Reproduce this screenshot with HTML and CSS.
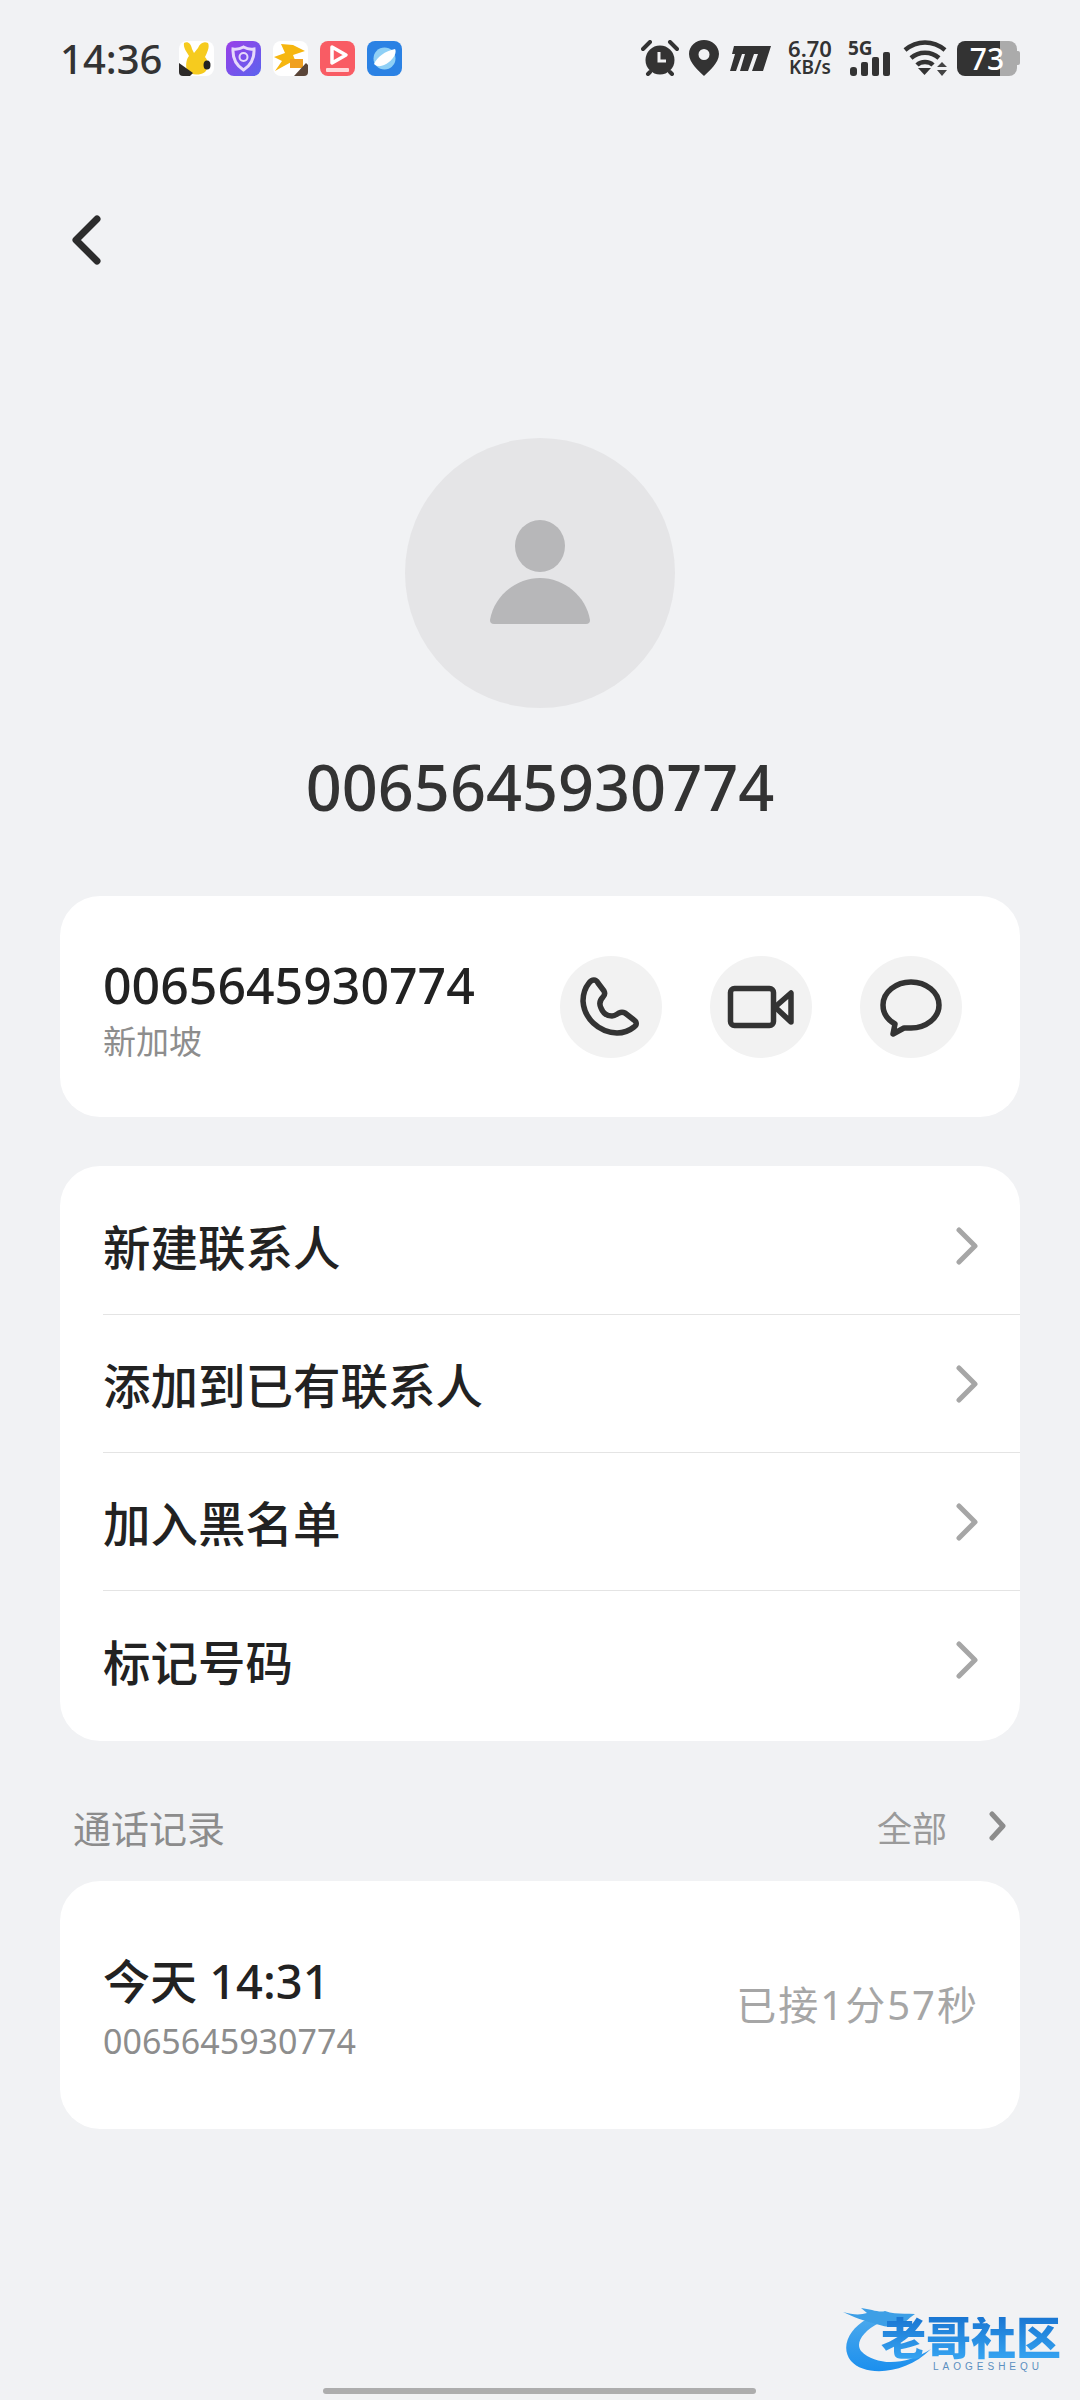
FILE: index.html
```html
<!DOCTYPE html>
<html lang="zh-CN">
<head>
    <meta charset="UTF-8">
    <meta name="viewport" content="width=device-width, initial-scale=1.0">
    <title>0065645930774</title>
    <link rel="stylesheet" href="styles.css">
</head>
<body>
    <div class="page">
        <div class="status-bar">
            <div class="status-left">
                <span class="clock">14:36</span>
                <svg class="app-icon" viewBox="0 0 35 35">
                    <rect width="35" height="35" rx="8" fill="#fff"/>
                    <path d="M5 2 C9 0 12 3 13 8 L15 12 L19 7 C21 2 25 0 29 2 C31 6 28 12 26 16 C30 20 30 27 26 31 C20 35 12 34 8 30 C6 23 8 17 10 15 C8 11 4 7 5 2Z" fill="#f6cb1e"/>
                    <ellipse cx="28" cy="24" rx="3.500" ry="4.500" fill="#222"/>
                    <path d="M0 22 L14 32 L11 35 L4 35 Q0 35 0 31Z" fill="#2c2a28"/>
                </svg>
                <svg class="app-icon" viewBox="0 0 35 35">
                    <defs>
                        <linearGradient id="shieldBg" x1="0" y1="0" x2="1" y2="1">
                            <stop offset="0" stop-color="#9a3fe8"/>
                            <stop offset="1" stop-color="#5a63ee"/>
                        </linearGradient>
                    </defs>
                    <rect width="35" height="35" rx="8" fill="url(#shieldBg)"/>
                    <path d="M17.500 6 C21 8 25 8.500 28 8 C28.500 17 24.500 24.500 17.500 29 C10.500 24.500 6.500 17 7 8 C10 8.500 14 8 17.500 6Z" fill="none" stroke="#e6d9fb" stroke-width="3"/>
                    <circle cx="17.500" cy="16" r="4" fill="none" stroke="#e6d9fb" stroke-width="2"/>
                </svg>
                <svg class="app-icon" viewBox="0 0 35 35">
                    <rect width="35" height="35" rx="8" fill="#fff"/>
                    <path d="M1 16 L12 12 L8 3 L20 4 L32 10 L20 14 L22 19 L11 25 L2 30 L9 20Z" fill="#f6b60f"/>
                    <rect x="17" y="18" width="13" height="9" fill="#f0a020"/>
                    <path d="M21 35 L33 22 L35 24 L35 31 Q35 35 31 35Z" fill="#5a4538"/>
                </svg>
                <svg class="app-icon" viewBox="0 0 35 35">
                    <rect width="35" height="35" rx="8" fill="#f95c64"/>
                    <path d="M12 6 L26 14 L12 22Z" fill="none" stroke="#fff" stroke-width="3.500" stroke-linejoin="round"/>
                    <rect x="6" y="27" width="23" height="4" rx="1" fill="#ffd9db"/>
                </svg>
                <svg class="app-icon" viewBox="0 0 35 35">
                    <rect width="35" height="35" rx="8" fill="#2b82e4"/>
                    <circle cx="17.500" cy="17.500" r="11" fill="#8fd0f6"/>
                    <path d="M7 23 C10 16 18 10 28 8 C30 11 27 17 22 21 C17 25 11 27 7 23Z" fill="#fff"/>
                </svg>
            </div>
            <div class="status-right">
                <svg class="st-alarm" viewBox="0 0 38 36">
                    <circle cx="19" cy="20" r="14.500" fill="#333"/>
                    <path d="M2 9 L9 2 M36 9 L29 2 M7 34 L9 32 M31 34 L29 32" stroke="#333" stroke-width="4" stroke-linecap="round"/>
                    <path d="M18 12 V21 H25" fill="none" stroke="#f1f2f4" stroke-width="3"/>
                </svg>
                <svg class="st-pin" viewBox="0 0 30 36">
                    <path fill-rule="evenodd" d="M15 0 C23 0 30 6 30 14 C30 23 20 31 15 36 C10 31 0 23 0 14 C0 6 7 0 15 0Z M15 9 A5.500 5.500 0 1 0 15 20 A5.500 5.500 0 1 0 15 9Z" fill="#333"/>
                </svg>
                <svg class="st-brand" viewBox="0 0 41 25">
                    <path d="M4 0 H41 L33 25 H22 L28 8 H24 L18 25 H10 L15 8 H12 L6 25 H0 L5 8 H2Z" fill="#333"/>
                </svg>
                <div class="st-speed">
                    <span>6.70</span>
                    <span class="st-speed-unit">KB/s</span>
                </div>
                <div class="st-signal">
                    <span class="st-5g">5G</span>
                    <svg class="st-bars" viewBox="0 0 41 36">
                        <rect x="0" y="27" width="7" height="9" rx="3" fill="#333"/>
                        <rect x="11" y="22" width="7" height="14" rx="2" fill="#333"/>
                        <rect x="22" y="17" width="7" height="19" rx="2" fill="#333"/>
                        <rect x="33" y="12" width="7" height="24" rx="2" fill="#333"/>
                    </svg>
                </div>
                <svg class="st-wifi" viewBox="0 0 46 36">
                    <path d="M2 10 C14 0 30 0 42 10 M8 18 C16 11 28 11 36 18 M14 25 C18 21 26 21 30 25" fill="none" stroke="#333" stroke-width="4.500"/>
                    <path d="M15 28 H28 L21.500 35Z" fill="#333"/>
                    <path d="M39 22 L44 27 H34Z M39 36 L44 30 H34Z" fill="#444"/>
                </svg>
                <div class="battery">
                    <div class="battery-body">73</div>
                    <div class="battery-tip"></div>
                </div>
            </div>
        </div>

        <div class="header">
            <svg class="back" viewBox="0 0 34 50">
                <path d="M27 4 L6 25 L27 46" fill="none" stroke="#2c2c2c" stroke-width="7" stroke-linecap="round" stroke-linejoin="round"/>
            </svg>
        </div>

        <div class="profile">
            <div class="avatar">
                <svg class="avatar-person" viewBox="0 0 100 104">
                    <ellipse cx="50" cy="26" rx="25" ry="26" fill="#b7b7b9"/>
                    <path d="M0 100 C4 76 26 58 50 58 C74 58 96 76 100 100 Q100 104 96 104 H4 Q0 104 0 100Z" fill="#b7b7b9"/>
                </svg>
            </div>
            <div class="profile-name">0065645930774</div>
        </div>

        <div class="card number-card">
            <div class="number-info">
                <div class="number-main">0065645930774</div>
                <div class="number-region">新加坡</div>
            </div>
            <div class="actions">
                <div class="action">
                    <svg viewBox="0 0 102 102">
                        <path d="M29 27 C32 23 36 23 38 27 L44 35 C45 37 45 39 43 41 C40 44 39 48 41 52 C43 57 47 60 52 60 C55 60 57 58 59 57 C61 56 63 56 65 57 L74 64 C77 66 77 69 74 71 C69 75 63 77 57 77 C38 76 24 62 23 45 C23 38 25 32 29 27Z" fill="none" stroke="#333" stroke-width="5.500" stroke-linejoin="round"/>
                    </svg>
                </div>
                <div class="action">
                    <svg viewBox="0 0 102 102">
                        <rect x="20.500" y="32.500" width="43" height="37" rx="4" fill="none" stroke="#333" stroke-width="5.500"/>
                        <path d="M65 51 L81 37 V66Z" fill="none" stroke="#333" stroke-width="5.500" stroke-linejoin="round"/>
                    </svg>
                </div>
                <div class="action">
                    <svg viewBox="0 0 102 102">
                        <path d="M51 26 C36 26 23 36 23 49 C23 58 28 64 35 68 L33 78 L44 72 C46 72 49 72 51 72 C66 72 79 62 79 49 C79 36 66 26 51 26Z" fill="none" stroke="#333" stroke-width="5.500" stroke-linejoin="round"/>
                    </svg>
                </div>
            </div>
        </div>

        <div class="card menu-card">
            <div class="menu-row">
                <span>新建联系人</span>
                <svg class="chevron" viewBox="0 0 24 38"><path d="M4 3 L20 19 L4 35" fill="none" stroke="#a6a6a6" stroke-width="5" stroke-linecap="round" stroke-linejoin="round"/></svg>
            </div>
            <div class="menu-row">
                <span>添加到已有联系人</span>
                <svg class="chevron" viewBox="0 0 24 38"><path d="M4 3 L20 19 L4 35" fill="none" stroke="#a6a6a6" stroke-width="5" stroke-linecap="round" stroke-linejoin="round"/></svg>
            </div>
            <div class="menu-row">
                <span>加入黑名单</span>
                <svg class="chevron" viewBox="0 0 24 38"><path d="M4 3 L20 19 L4 35" fill="none" stroke="#a6a6a6" stroke-width="5" stroke-linecap="round" stroke-linejoin="round"/></svg>
            </div>
            <div class="menu-row">
                <span>标记号码</span>
                <svg class="chevron" viewBox="0 0 24 38"><path d="M4 3 L20 19 L4 35" fill="none" stroke="#a6a6a6" stroke-width="5" stroke-linecap="round" stroke-linejoin="round"/></svg>
            </div>
        </div>

        <div class="section-head">
            <span class="section-title">通话记录</span>
            <div class="section-all">
                <span>全部</span>
                <svg viewBox="0 0 20 30"><path d="M4 3 L15 15 L4 27" fill="none" stroke="#8c8c8c" stroke-width="5" stroke-linecap="round" stroke-linejoin="round"/></svg>
            </div>
        </div>

        <div class="card call-card">
            <div class="call-info">
                <div class="call-time">今天 14:31</div>
                <div class="call-number">0065645930774</div>
            </div>
            <div class="call-duration">已接1分57秒</div>
        </div>

        <div class="watermark">
            <svg class="wm-dragon" viewBox="0 0 100 70">
                <defs>
                    <linearGradient id="dragonBlue" x1="0" y1="0" x2="0" y2="1">
                        <stop offset="0" stop-color="#4aa8ec"/>
                        <stop offset="1" stop-color="#1b8fee"/>
                    </linearGradient>
                </defs>
                <path d="M24 14 C6 24 -3 42 8 56 C22 72 62 70 88 44 C64 60 34 62 18 46 C12 38 20 26 36 18Z" fill="url(#dragonBlue)"/>
                <path d="M0 7 C10 10 18 10 24 8 L18 3 C28 4 36 8 42 6 C52 10 60 8 72 9 C64 14 62 20 52 20 C44 24 38 20 30 18 C22 16 10 12 0 7Z" fill="#3d9fe6"/>
            </svg>
            <div class="wm-name">老哥社区</div>
            <div class="wm-sub">LAOGESHEQU</div>
        </div>

        <div class="home-bar"></div>
    </div>
</body>
</html>
```

FILE: styles.css
```css
body {
    margin: 0;
    background: #f1f2f4;
    font-family: Roboto, "Noto Sans CJK SC", sans-serif;
    color: #222;
}

.page {
    position: relative;
    width: 1080px;
    height: 2400px;
    overflow: hidden;
}

/* Status bar */
.status-bar {
    height: 116px;
    padding: 0 60px;
    display: flex;
    justify-content: space-between;
    align-items: center;
    box-sizing: border-box;
}

.status-left,
.status-right {
    display: flex;
    align-items: center;
}

.clock {
    font-family: "Noto Sans", sans-serif;
    font-size: 40px;
    font-weight: 500;
    color: #333;
    width: 119px;
}

.app-icon {
    width: 35px;
    height: 35px;
    margin-right: 12px;
}

.st-alarm { width: 38px; height: 36px; margin-right: 10px; }
.st-pin { width: 30px; height: 36px; margin-right: 11px; }
.st-brand { width: 41px; height: 25px; margin-right: 16px; }

.st-speed {
    display: flex;
    flex-direction: column;
    align-items: center;
    width: 46px;
    margin-right: 15px;
    font-family: "Noto Sans", sans-serif;
    font-size: 22px;
    font-weight: 600;
    line-height: 19px;
    color: #333;
}

.st-speed-unit { font-size: 19px; }

.st-signal {
    position: relative;
    width: 43px;
    height: 36px;
    margin-right: 12px;
}

.st-bars {
    display: block;
    width: 41px;
    height: 36px;
    margin-left: 2px;
}

.st-5g {
    position: absolute;
    left: 0;
    top: -2px;
    font-family: "Noto Sans", sans-serif;
    font-size: 19px;
    font-weight: 700;
    line-height: 20px;
    color: #333;
}

.st-wifi { width: 46px; height: 36px; margin-right: 8px; }

.battery {
    display: flex;
    align-items: center;
}

.battery-body {
    width: 60px;
    height: 35px;
    border-radius: 8px;
    background: linear-gradient(90deg, #333 43px, #ababab 43px);
    display: flex;
    align-items: center;
    justify-content: center;
    font-family: "Noto Sans", sans-serif;
    font-size: 30px;
    font-weight: 500;
    line-height: 35px;
    color: #fff;
}

.battery-tip {
    width: 3px;
    height: 14px;
    background: #ababab;
    border-radius: 0 2px 2px 0;
}

/* Header */
.header {
    height: 248px;
    padding-left: 70px;
    display: flex;
    align-items: center;
}

.back { width: 34px; height: 50px; }

/* Avatar and name */
.profile {
    padding-top: 74px;
    display: flex;
    flex-direction: column;
    align-items: center;
}

.avatar {
    width: 270px;
    height: 270px;
    border-radius: 50%;
    background: #e5e5e7;
    display: flex;
    justify-content: center;
    align-items: center;
}

.avatar-person {
    width: 100px;
    height: 104px;
    margin-bottom: 3px;
}

.profile-name {
    margin-top: 41px;
    height: 76px;
    font-family: "Noto Sans", sans-serif;
    font-size: 63px;
    font-weight: 500;
    line-height: 76px;
    color: #333;
}

/* Cards */
.card {
    margin: 0 60px;
    background: #fff;
    border-radius: 40px;
}

.number-card {
    margin-top: 71px;
    height: 221px;
    padding: 0 43px;
    display: flex;
    justify-content: space-between;
    align-items: center;
}

.number-info { margin-top: 6px; }

.number-main {
    font-family: "Noto Sans", sans-serif;
    font-size: 50px;
    font-weight: 500;
    line-height: 60px;
    color: #222;
}

.number-region {
    margin-top: 6px;
    font-size: 33px;
    line-height: 44px;
    color: #8d8d8d;
}

.actions {
    display: flex;
    gap: 48px;
    margin-right: 15px;
}

.action {
    width: 102px;
    height: 102px;
    border-radius: 50%;
    background: #f2f2f2;
}

.action svg {
    display: block;
    width: 102px;
    height: 102px;
}

.menu-card {
    margin-top: 49px;
    padding: 11px 0 12px 43px;
    display: flex;
    flex-direction: column;
}

.menu-row {
    height: 138px;
    box-sizing: border-box;
    display: flex;
    justify-content: space-between;
    align-items: center;
    padding-right: 41px;
    font-size: 47.500px;
    font-weight: 500;
    border-bottom: 1px solid #e4e4e4;
}

.menu-row:last-child { border-bottom: none; }

.chevron { width: 24px; height: 38px; }

.section-head {
    margin: 0 60px;
    height: 140px;
    padding: 30px 12px 0 13px;
    box-sizing: border-box;
    display: flex;
    justify-content: space-between;
    align-items: center;
    color: #8c8c8c;
}

.section-title {
    font-size: 38px;
}

.section-all {
    display: flex;
    align-items: center;
    gap: 41px;
    font-size: 35px;
    color: #9a9a9a;
}

.section-all svg { width: 20px; height: 30px; }

.call-card {
    height: 248px;
    padding: 0 43px;
    display: flex;
    justify-content: space-between;
    align-items: center;
}

.call-info { margin-top: 4px; }

.call-time {
    font-size: 47px;
    font-weight: 500;
    line-height: 60px;
    font-family: "Noto Sans", "Noto Sans CJK SC", sans-serif;
}

.call-number {
    margin-top: 8px;
    font-family: "Noto Sans", sans-serif;
    font-size: 34px;
    line-height: 44px;
    color: #8d8d8d;
}

.call-duration {
    margin-bottom: 4px;
    margin-right: -2px;
    font-family: "Noto Sans", "Noto Sans CJK SC", sans-serif;
    font-size: 40px;
    letter-spacing: 2px;
    color: #a6a6a6;
}

/* Watermark sits over the page corner */
.watermark {
    position: absolute;
    left: 843px;
    top: 2305px;
    width: 225px;
    height: 70px;
}

.wm-dragon {
    position: absolute;
    left: 0;
    top: 0;
    width: 100px;
    height: 70px;
}

.wm-name {
    position: absolute;
    left: 38px;
    top: 12px;
    font-size: 45px;
    line-height: 46px;
    font-weight: 900;
    white-space: nowrap;
    background: linear-gradient(#1a76d2, #38a8f4);
    -webkit-background-clip: text;
    background-clip: text;
    color: transparent;
}

.wm-sub {
    position: absolute;
    left: 90px;
    top: 56px;
    font-family: "Liberation Sans", sans-serif;
    font-size: 10px;
    letter-spacing: 4px;
    line-height: 12px;
    color: #5b8fc0;
}

.home-bar {
    position: absolute;
    left: 323px;
    bottom: 6px;
    width: 433px;
    height: 6px;
    border-radius: 3px;
    background: #adadad;
}
```
